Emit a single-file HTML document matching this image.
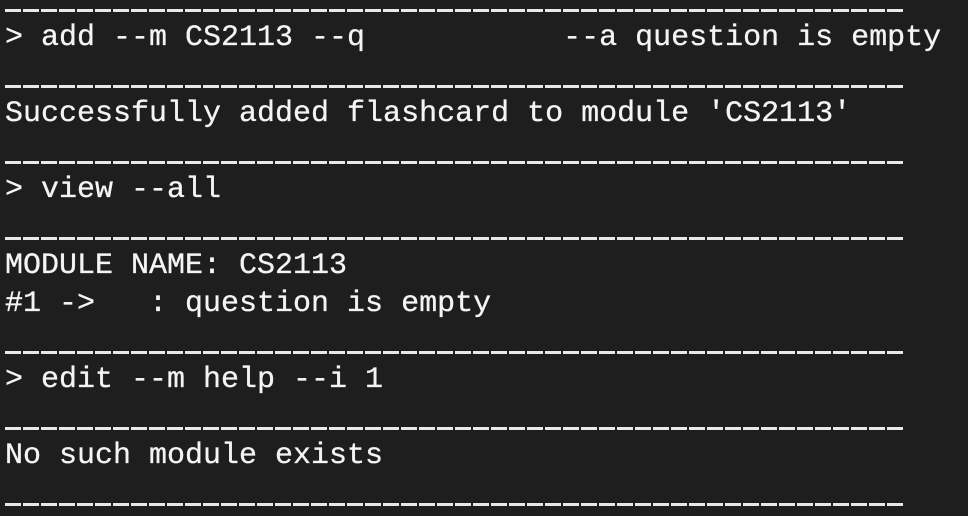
<!DOCTYPE html>
<html><head><meta charset="utf-8"><style>
html,body{margin:0;padding:0}
body{width:968px;height:516px;background:#1e1e1e;position:relative;overflow:hidden;font-family:"Liberation Mono",monospace;font-size:30px;color:#f4f4f4}
.s{position:absolute;left:5px;width:900px;height:3px;background:repeating-linear-gradient(90deg,#e8e8e8 0 16px,transparent 16px 18px)}
.t{position:absolute;left:5px;white-space:pre;line-height:30px;height:30px;-webkit-text-stroke:0.3px #f4f4f4}
</style></head><body>
<div class="s" style="top:9px"></div>
<div class="t" style="top:23px">&gt; add --m CS2113 --q           --a question is empty</div>
<div class="s" style="top:85px"></div>
<div class="t" style="top:99px">Successfully added flashcard to module 'CS2113'</div>
<div class="s" style="top:161px"></div>
<div class="t" style="top:175px">&gt; view --all</div>
<div class="s" style="top:237px"></div>
<div class="t" style="top:251px">MODULE NAME: CS2113</div>
<div class="t" style="top:289px">#1 -&gt;   : question is empty</div>
<div class="s" style="top:351px"></div>
<div class="t" style="top:365px">&gt; edit --m help --i 1</div>
<div class="s" style="top:427px"></div>
<div class="t" style="top:441px">No such module exists</div>
<div class="s" style="top:503px"></div>
</body></html>
